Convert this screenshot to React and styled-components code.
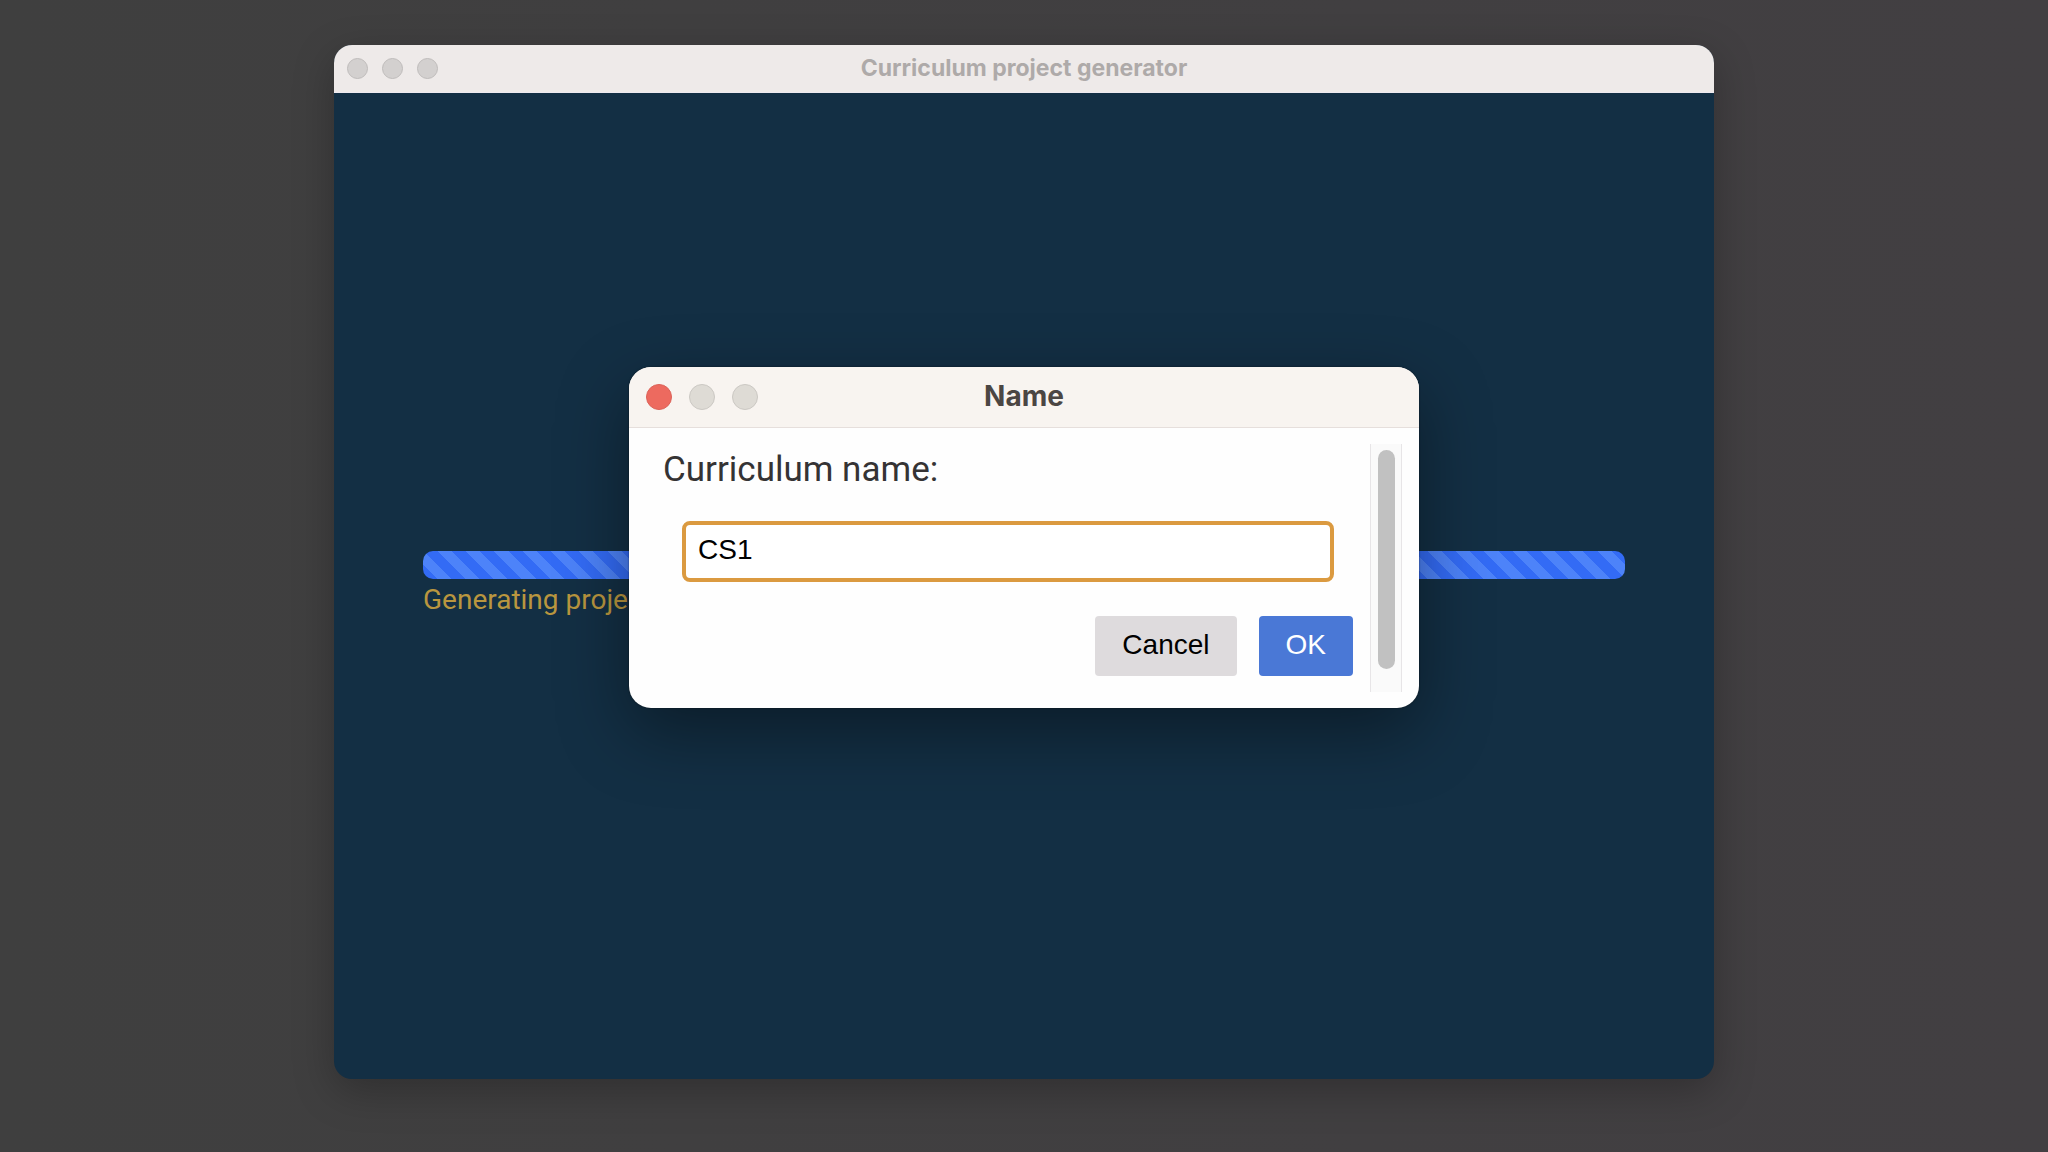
import styled, { createGlobalStyle } from 'styled-components';

const GlobalStyle = createGlobalStyle`
  * {
    box-sizing: border-box;
  }

  body {
    margin: 0;
    background-color: #403f40;
    font-family: Roboto, 'Liberation Sans', sans-serif;
  }
`;

const Desktop = styled.main`
  display: flex;
  min-height: 100vh;
  padding: 45px 334px 73px;
  background: linear-gradient(90deg, #3f3f3f, #423f42);

  @media (max-width: 1500px) {
    padding: 45px 40px 73px;
  }
`;

const AppWindow = styled.section`
  position: relative;
  display: flex;
  flex: 1;
  flex-direction: column;
  border-radius: 18px;
  background-color: #132f44;
  box-shadow: 0 12px 40px #00000040;
`;

const TitleBar = styled.header`
  display: grid;
  grid-template-columns: 1fr auto 1fr;
  align-items: center;
  height: ${({ $active }) => ($active ? '61px' : '48px')};
  padding: 0 ${({ $active }) => ($active ? '17px' : '13px')};
  border-bottom: 1px solid ${({ $active }) => ($active ? '#e6dfdc' : '#eeeaf0')};
  border-radius: ${({ $active }) => ($active ? '22px 22px 0 0' : '18px 18px 0 0')};
  background-color: ${({ $active }) => ($active ? '#f8f4f0' : '#eeeae9')};
`;

const Lights = styled.div`
  display: flex;
  gap: ${({ $active }) => ($active ? '17px' : '14px')};
`;

const Light = styled.button`
  width: ${({ $size }) => $size}px;
  height: ${({ $size }) => $size}px;
  padding: 0;
  border: 1px solid ${({ $border }) => $border};
  border-radius: 50%;
  background-color: ${({ $color }) => $color};
`;

const WindowTitle = styled.h1`
  margin: 0;
  padding-bottom: 2px;
  color: #aeaaa9;
  font-family: Inter, 'Liberation Sans', sans-serif;
  font-size: 23px;
  font-weight: 700;
  line-height: 28px;
`;

const DialogTitle = styled.h2`
  margin: 0;
  padding-bottom: 2px;
  color: #4b4643;
  font-family: Inter, 'Liberation Sans', sans-serif;
  font-size: 28px;
  font-weight: 700;
  line-height: 34px;
`;

const WindowBody = styled.div`
  display: flex;
  flex: 1;
  flex-direction: column;
  justify-content: center;
  padding: 0 89px;
`;

const ProgressBar = styled.div`
  height: 28px;
  border-radius: 10px;
  background: repeating-linear-gradient(
    45deg,
    #336bf5 0 10px,
    #4d83f9 10px 20px
  );
`;

const Status = styled.p`
  margin: 0;
  color: #b9963f;
  font-size: 28px;
  line-height: 42px;
`;

const Overlay = styled.div`
  position: absolute;
  inset: 0;
  display: flex;
  align-items: center;
  justify-content: center;
  padding-bottom: 50px;
`;

const Dialog = styled.section`
  width: 100%;
  max-width: 790px;
  border-radius: 22px;
  background-color: #fefefe;
  box-shadow: 0 24px 70px #00000066, 0 0 2px #00000080;
`;

const DialogBody = styled.div`
  display: flex;
  padding: 16px 17px;
`;

const Form = styled.form`
  display: flex;
  flex: 1;
  flex-direction: column;
  padding: 5px 17px 16px;
`;

const Label = styled.label`
  color: #353334;
  font-size: 35px;
  line-height: 42px;
`;

const TextInput = styled.input`
  height: 61px;
  margin: 30px 19px 34px;
  padding: 0 12px 2px;
  border: 4px solid #db9a40;
  border-radius: 8px;
  outline: none;
  background-color: #fff;
  color: #000;
  font-family: 'Liberation Sans', Arial, sans-serif;
  font-size: 28px;
`;

const Actions = styled.div`
  display: flex;
  justify-content: flex-end;
  gap: 22px;
`;

const Button = styled.button`
  height: 60px;
  padding: 0 27px 2px;
  border: none;
  border-radius: 4px;
  background-color: ${({ $primary }) => ($primary ? '#4a78d6' : '#dedbdd')};
  color: ${({ $primary }) => ($primary ? '#fff' : '#000')};
  font-family: 'Liberation Sans', Arial, sans-serif;
  font-size: 28px;
`;

const ScrollTrack = styled.div`
  width: 32px;
  padding: 6px 6px 23px 7px;
  border: solid #e7e5e7;
  border-width: 0 1px;
  background-color: #fafafa;
`;

const ScrollThumb = styled.div`
  height: 100%;
  border-radius: 9px;
  background-color: #c1c1c1;
`;

function WindowLights({ active }) {
  const size = active ? 26 : 21;
  const idle = active
    ? { $color: '#dedbd5', $border: '#cbc8c3' }
    : { $color: '#d3d0cf', $border: '#bfbcbb' };
  const close = active ? { $color: '#ed6a5f', $border: '#dc6258' } : idle;

  return (
    <Lights $active={active}>
      <Light type="button" aria-label="Close" $size={size} {...close} />
      <Light type="button" aria-label="Minimize" $size={size} {...idle} />
      <Light type="button" aria-label="Zoom" $size={size} {...idle} />
    </Lights>
  );
}

export default function App() {
  return (
    <>
      <GlobalStyle />
      <Desktop>
        <AppWindow>
          <TitleBar>
            <WindowLights />
            <WindowTitle>Curriculum project generator</WindowTitle>
          </TitleBar>
          <WindowBody>
            <ProgressBar role="progressbar" aria-labelledby="status" />
            <Status id="status">Generating project</Status>
          </WindowBody>
          <Overlay>
            <Dialog role="dialog" aria-labelledby="dialog-title">
              <TitleBar $active>
                <WindowLights active />
                <DialogTitle id="dialog-title">Name</DialogTitle>
              </TitleBar>
              <DialogBody>
                <Form onSubmit={(e) => e.preventDefault()}>
                  <Label htmlFor="curriculum-name">Curriculum name:</Label>
                  <TextInput id="curriculum-name" type="text" defaultValue="CS1" />
                  <Actions>
                    <Button type="button">Cancel</Button>
                    <Button type="submit" $primary>OK</Button>
                  </Actions>
                </Form>
                <ScrollTrack>
                  <ScrollThumb />
                </ScrollTrack>
              </DialogBody>
            </Dialog>
          </Overlay>
        </AppWindow>
      </Desktop>
    </>
  );
}
